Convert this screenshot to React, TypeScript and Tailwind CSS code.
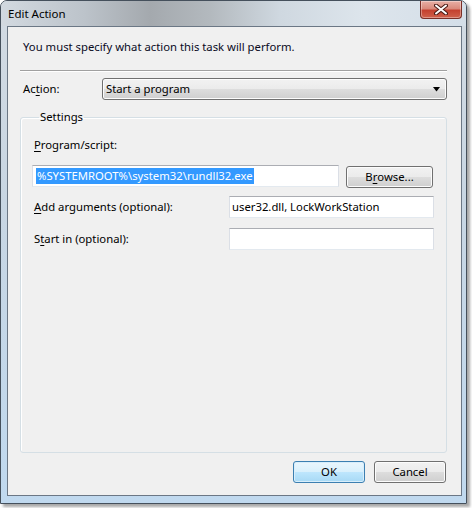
import React from 'react'

const font = { fontFamily: '"Noto Sans", "Open Sans", Arial, sans-serif' }

function U({ children }: { children: React.ReactNode }) {
  return <span className="underline underline-offset-[2px] decoration-[1px]">{children}</span>
}

function TextBox({ children, className = '' }: { children?: React.ReactNode; className?: string }) {
  return (
    <div
      className={`flex h-[22px] items-center border border-[#abadb3] border-l-[#dbdfe6] border-r-[#dbdfe6] border-b-[#e3e9ef] bg-white pl-[2px] text-[11.3px] text-black ${className}`}
    >
      {children}
    </div>
  )
}

function Button({ children, isDefault = false, className = '' }: { children: React.ReactNode; isDefault?: boolean; className?: string }) {
  return (
    <button
      className={`flex h-[22px] items-center justify-center rounded-[3px] border text-[11.3px] text-black ${
        isDefault
          ? 'border-[#3c7fb1] bg-[linear-gradient(180deg,#eaf6fd_0%,#d9f0fc_50%,#bee6fd_51%,#a7d9f5_100%)] shadow-[inset_0_0_0_1px_#d8eefb]'
          : 'border-[#707070] bg-[linear-gradient(180deg,#f2f2f2_0%,#ebebeb_50%,#dddddd_51%,#cfcfcf_100%)] shadow-[inset_0_0_0_1px_#fcfcfc]'
      } ${className}`}
    >
      {children}
    </button>
  )
}

export default function App() {
  return (
    <div className="h-[508px] w-[472px] overflow-hidden bg-white" style={font}>
      <div className="flex h-[504px] w-[467px] flex-col rounded-t-[7px] border border-[#45505c] bg-[linear-gradient(180deg,#d3dbe3_0%,#c8d6e3_40%,#c0d9ef_100%)] pb-[7px] pl-[6px] pr-[4px] shadow-[3px_3px_3px_rgba(0,0,0,0.35)]">
        {/* title bar */}
        <div className="-ml-[6px] -mr-[4px] flex h-[25px] items-start justify-between rounded-t-[6px] bg-[linear-gradient(90deg,#d2d9e0_0%,#bcc3ca_18%,#a4a9ae_32%,#b3b9be_45%,#cfd8e0_60%,#dde5ec_78%,#d4dee8_100%)] pl-[7px] pr-[4px]">
          <span className="mt-[5px] text-[11.5px] leading-[16px] text-black">Edit Action</span>
          <div className="flex h-[18px] w-[42px] items-center justify-center rounded-b-[4px] border border-t-0 border-[#7a2f27] bg-[linear-gradient(180deg,#e8b0a6_0%,#d98a7c_45%,#c4412f_55%,#d0624c_100%)] shadow-[inset_0_0_0_1px_rgba(255,255,255,0.35)]">
            <svg width="14" height="11" viewBox="0 0 14 11">
              <path d="M2 1.5 L12 9.5 M12 1.5 L2 9.5" stroke="#4a1a14" strokeWidth="4" strokeLinecap="round" />
              <path d="M2 1.5 L12 9.5 M12 1.5 L2 9.5" stroke="#ffffff" strokeWidth="2" strokeLinecap="round" />
            </svg>
          </div>
        </div>

        {/* client area */}
        <div className="flex flex-1 flex-col border border-[#6b7785] bg-[#f0f0f0] pl-[12px] pr-[14px] text-[11.3px] leading-[16px] text-black">
          <p className="mt-[12px] pl-[3px] text-[#0a0a1e]">You must specify what action this task will perform.</p>

          <div className="mt-[15px] h-[2px] border-t border-b border-t-[#a0a0a0] border-b-white" />

          <div className="mt-[6px] flex items-center">
            <span className="w-[82px] pl-[3px]">
              Ac<U>t</U>ion:
            </span>
            <div className="flex h-[22px] flex-1 items-center justify-between rounded-[3px] border border-[#707070] bg-[linear-gradient(180deg,#f2f2f2_0%,#ebebeb_50%,#dddddd_51%,#cfcfcf_100%)] pl-[3px] pr-[6px] shadow-[inset_0_0_0_1px_#fcfcfc]">
              <span>Start a program</span>
              <svg width="7" height="5" viewBox="0 0 7 5">
                <path d="M0 0 H7 L3.5 4.5 Z" fill="#000" />
              </svg>
            </div>
          </div>

          <fieldset className="mt-[9px] flex min-h-0 flex-1 flex-col rounded-[3px] border border-[#d5dfe5] pl-[11px] pr-[12px] shadow-[inset_1px_1px_0_#ffffff]">
            <legend className="ml-[7px] px-[1px]">Settings</legend>

            <span className="mt-[12px] pl-[2px]">
              <U>P</U>rogram/script:
            </span>

            <div className="mt-[12px] flex items-start gap-[7px]">
              <TextBox className="flex-1">
                <span className="ml-[1px] bg-[#3399ff] pl-[1px] pr-[1px] text-white">%SYSTEMROOT%\system32\rundll32.exe</span>
              </TextBox>
              <Button className="mr-[1px] mt-[1px] w-[87px]">
                B<U>r</U>owse...
              </Button>
            </div>

            <div className="mt-[8px] flex items-center">
              <span className="w-[197px] pl-[2px]">
                <U>A</U>dd arguments (optional):
              </span>
              <TextBox className="flex-1">user32.dll, LockWorkStation</TextBox>
            </div>

            <div className="mt-[10px] flex items-center">
              <span className="w-[197px] pl-[2px]">
                S<U>t</U>art in (optional):
              </span>
              <TextBox className="flex-1" />
            </div>
          </fieldset>

          <div className="mb-[12px] mr-[1px] mt-[8px] flex justify-end gap-[9px]">
            <Button isDefault className="w-[72px]">
              OK
            </Button>
            <Button className="w-[72px]">Cancel</Button>
          </div>
        </div>
      </div>
    </div>
  )
}
